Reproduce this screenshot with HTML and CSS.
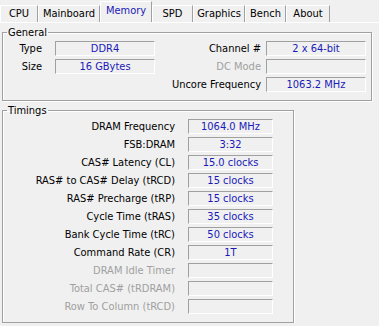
FILE: index.html
```html
<!DOCTYPE html>
<html lang="en">

<head>
    <meta charset="UTF-8">
    <title>CPU-Z Memory</title>
    <link rel="stylesheet" href="styles.css">
</head>

<body>
    <div class="tabs">
        <div class="tab">CPU</div>
        <div class="tab">Mainboard</div>
        <div class="tab active">Memory</div>
        <div class="tab">SPD</div>
        <div class="tab">Graphics</div>
        <div class="tab">Bench</div>
        <div class="tab">About</div>
    </div>

    <div class="panel">
        <fieldset class="group general">
            <legend>General</legend>
            <div class="grid">
                <span class="lbl first">Type</span>
                <span class="field">DDR4</span>
                <span class="lbl">Channel #</span>
                <span class="field">2 x 64-bit</span>

                <span class="lbl first">Size</span>
                <span class="field">16 GBytes</span>
                <span class="lbl off">DC Mode</span>
                <span class="field"></span>

                <span class="lbl uncore">Uncore Frequency</span>
                <span class="field">1063.2 MHz</span>
            </div>
        </fieldset>

        <fieldset class="group timings">
            <legend>Timings</legend>
            <div class="grid">
                <span class="lbl">DRAM Frequency</span>
                <span class="field">1064.0 MHz</span>
                <span class="lbl">FSB:DRAM</span>
                <span class="field">3:32</span>
                <span class="lbl">CAS# Latency (CL)</span>
                <span class="field">15.0 clocks</span>
                <span class="lbl">RAS# to CAS# Delay (tRCD)</span>
                <span class="field">15 clocks</span>
                <span class="lbl">RAS# Precharge (tRP)</span>
                <span class="field">15 clocks</span>
                <span class="lbl">Cycle Time (tRAS)</span>
                <span class="field">35 clocks</span>
                <span class="lbl">Bank Cycle Time (tRC)</span>
                <span class="field">50 clocks</span>
                <span class="lbl">Command Rate (CR)</span>
                <span class="field">1T</span>
                <span class="lbl off">DRAM Idle Timer</span>
                <span class="field"></span>
                <span class="lbl off">Total CAS# (tRDRAM)</span>
                <span class="field"></span>
                <span class="lbl off">Row To Column (tRCD)</span>
                <span class="field"></span>
            </div>
        </fieldset>
    </div>
</body>

</html>
```

FILE: styles.css
```css
body {
    margin: 0;
    background-color: #f0f0f0;
    font-family: "DejaVu Sans", "Liberation Sans", sans-serif;
    font-stretch: condensed;
    font-size: 11px;
    color: #000;
}

/* tab strip */
.tabs {
    display: grid;
    grid-template-columns: 38px 62px 52px 41px 52px 41px 44px;
    align-items: end;
    height: 22px;
}

.tab {
    height: 17px;
    line-height: 16px;
    text-align: center;
    border-top: 1px solid #fff;
    border-left: 1px solid #fff;
    border-right: 1px solid #a0a0a0;
    box-sizing: border-box;
}

.tab.active {
    height: 21px;
    line-height: 17px;
    color: #1a1ab8;
}

.panel {
    border-top: 1px solid #fff;
    padding: 3px 0 0 2px;
}

/* group boxes */
.group {
    margin: 0;
    padding: 0;
    border: 1px solid #a0a0a0;
    box-shadow: 1px 1px 0 #fff, inset 1px 1px 0 #fff;
    min-width: 0;
}

.group legend {
    padding: 0 1px;
    margin-left: 4px;
    line-height: 13px;
}

.general {
    width: 370px;
    box-sizing: border-box;
    padding: 2px 5px 8px 0;
}

.general .grid {
    display: grid;
    grid-template-columns: 47px 100px 1fr 100px;
    grid-auto-rows: 15px;
    column-gap: 5px;
    row-gap: 3px;
}

.general .first {
    padding-right: 8px;
}

.general .uncore {
    grid-column: 3;
}

.timings {
    width: 292px;
    box-sizing: border-box;
    margin-top: 3px;
    padding: 2px 20px 8px 0;
}

.timings .grid {
    display: grid;
    grid-template-columns: 1fr 85px;
    grid-auto-rows: 15px;
    column-gap: 13px;
    row-gap: 3px;
}

.lbl {
    text-align: right;
    line-height: 15px;
    white-space: nowrap;
}

.lbl.off {
    color: #a0a0a0;
}

.field {
    box-sizing: border-box;
    border-top: 1px solid #a0a0a0;
    border-left: 1px solid #a0a0a0;
    border-right: 1px solid #fff;
    border-bottom: 1px solid #fff;
    text-align: center;
    line-height: 13px;
    color: #1a1ab8;
}
```
